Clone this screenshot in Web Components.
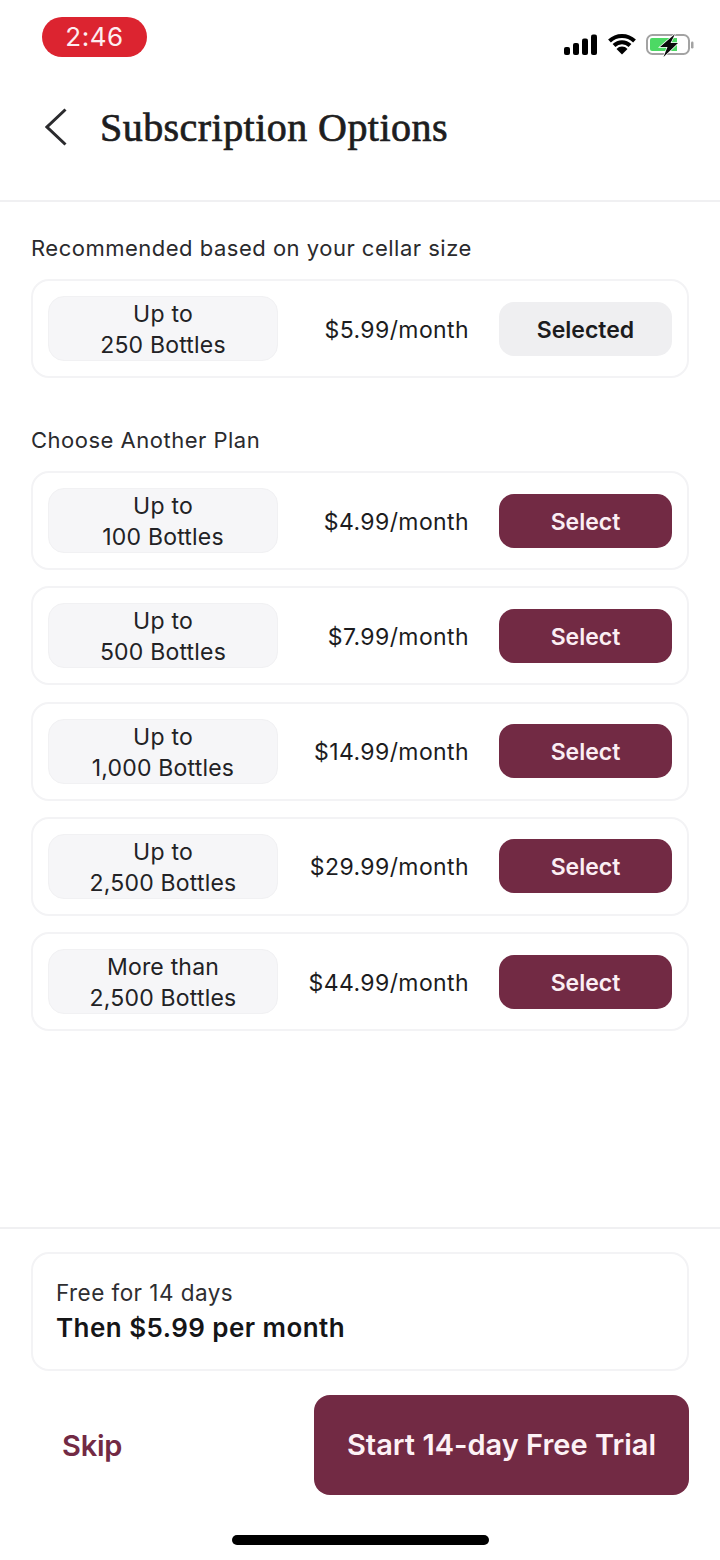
<!DOCTYPE html>
<html lang="en">
<head>
<meta charset="utf-8">
<title>Subscription Options</title>
<style>
    html, body {
        margin: 0;
        background: #fff;
    }
    body {
        width: 720px;
        height: 1560px;
        overflow: hidden;
        font-family: 'Inter', 'Liberation Sans', sans-serif;
        color: #1c1c1e;
    }
</style>
</head>
<body>
<subscription-page></subscription-page>
<script>
// --- Data for Plans ---
const recommendedPlan = { line1: 'Up to', line2: '250 Bottles', price: '$5.99/month', selected: true };
const otherPlans = [
    { line1: 'Up to', line2: '100 Bottles', price: '$4.99/month' },
    { line1: 'Up to', line2: '500 Bottles', price: '$7.99/month' },
    { line1: 'Up to', line2: '1,000 Bottles', price: '$14.99/month' },
    { line1: 'Up to', line2: '2,500 Bottles', price: '$29.99/month' },
    { line1: 'More than', line2: '2,500 Bottles', price: '$44.99/month' }
];

// --- Web Component: StatusBar ---
class StatusBar extends HTMLElement {
    constructor() {
        super();
        this.attachShadow({ mode: 'open' });
        this.shadowRoot.innerHTML = `
            <style>
                :host {
                    display: flex;
                    justify-content: space-between;
                    align-items: flex-start;
                    height: 80px;
                    padding: 17px 26px 0 42px;
                    box-sizing: border-box;
                }
                .time {
                    width: 105px;
                    height: 40px;
                    border-radius: 20px;
                    background: #dc2430;
                    color: #fdeef0;
                    font-size: 26px;
                    line-height: 40px;
                    text-align: center;
                    letter-spacing: 0.5px;
                }
                svg { display: block; margin-top: 14px; }
            </style>
            <div class="time">2:46</div>
            <svg width="130" height="26" viewBox="0 0 130 26" aria-hidden="true">
                <rect x="0" y="16" width="6" height="8" rx="2" fill="#000"/>
                <rect x="9" y="12" width="6" height="12" rx="2" fill="#000"/>
                <rect x="18" y="7.5" width="6" height="16.5" rx="2" fill="#000"/>
                <rect x="27" y="3.5" width="6" height="20.5" rx="2" fill="#000"/>
                <path d="M45.5 10 A18 18 0 0 1 70.5 10 M50 14.5 A11.5 11.5 0 0 1 66 14.5" fill="none" stroke="#000" stroke-width="4"/>
                <path d="M52.5 18 A7.5 7.5 0 0 1 63.5 18 L58 23.5 Z" fill="#000"/>
                <rect x="83" y="4" width="42" height="19" rx="5.5" fill="#fff" stroke="#a3a3a3" stroke-width="2"/>
                <path d="M86 9 a2 2 0 0 1 2 -2 H113 V20 H88 a2 2 0 0 1 -2 -2 Z" fill="#4cd964"/>
                <rect x="127" y="10.5" width="2.5" height="7" rx="1.2" fill="#a3a3a3"/>
                <path d="M111 3 L96 16 H103.5 L99.5 26 L114 12 H106.5 Z" fill="#0a0a0a" stroke="#fff" stroke-width="1.5" paint-order="stroke"/>
            </svg>
        `;
    }
}
customElements.define('status-bar', StatusBar);

// --- Web Component: NavHeader ---
class NavHeader extends HTMLElement {
    constructor() {
        super();
        this.attachShadow({ mode: 'open' });
        this.shadowRoot.innerHTML = `
            <style>
                :host {
                    display: flex;
                    align-items: center;
                    gap: 33px;
                    height: 122px;
                    padding: 0 0 26px 45px;
                    box-sizing: border-box;
                    border-bottom: 2px solid #f0f0f2;
                }
                svg { display: block; flex: none; }
                h1 {
                    margin: 0;
                    font-family: 'Liberation Serif', serif;
                    font-size: 40px;
                    font-weight: 400;
                    color: #1d1d20;
                    -webkit-text-stroke: 0.7px #1d1d20;
                    letter-spacing: 0.45px;
                }
            </style>
            <svg width="22" height="38" viewBox="0 0 22 38" aria-hidden="true">
                <path d="M20.5 1.5 L2 19 L20.5 36.5" fill="none" stroke="#2b2b2e" stroke-width="3"/>
            </svg>
            <h1><slot></slot></h1>
        `;
    }
}
customElements.define('nav-header', NavHeader);

// --- Web Component: PlanCard ---
class PlanCard extends HTMLElement {
    constructor() {
        super();
        this.attachShadow({ mode: 'open' });
    }

    set plan(plan) {
        this.shadowRoot.innerHTML = `
            <style>
                :host {
                    display: grid;
                    grid-template-columns: 230px 1fr 173px;
                    align-items: center;
                    height: 99px;
                    padding: 0 15px;
                    box-sizing: border-box;
                    border: 2px solid #f3f3f5;
                    border-radius: 18px;
                    background: #fff;
                }
                .size {
                    display: flex;
                    flex-direction: column;
                    align-items: center;
                    justify-content: center;
                    height: 65px;
                    padding-top: 3px;
                    box-sizing: border-box;
                    border: 1px solid #f1f1f3;
                    border-radius: 16px;
                    background: #f6f6f8;
                    font-size: 23px;
                    line-height: 31px;
                    color: #222225;
                    letter-spacing: 0.2px;
                }
                .price {
                    padding: 2px 30px 0 0;
                    text-align: right;
                    font-size: 23px;
                    color: #1c1c1e;
                    letter-spacing: 0.4px;
                }
                .action {
                    height: 54px;
                    border-radius: 15px;
                    text-align: center;
                    font-size: 23px;
                    font-weight: 600;
                    line-height: 56px;
                    background: #722a44;
                    color: #fbeef3;
                }
                .action.selected {
                    background: #efeff1;
                    color: #1c1c1e;
                }
            </style>
            <div class="size"><span>${plan.line1}</span><span>${plan.line2}</span></div>
            <div class="price">${plan.price}</div>
            <div class="action ${plan.selected ? 'selected' : ''}">${plan.selected ? 'Selected' : 'Select'}</div>
        `;
    }
}
customElements.define('plan-card', PlanCard);

// --- Web Component: PlanSection ---
class PlanSection extends HTMLElement {
    constructor() {
        super();
        this.attachShadow({ mode: 'open' });
        this.shadowRoot.innerHTML = `
            <style>
                :host {
                    display: block;
                }
                .label {
                    height: 28px;
                    margin-bottom: 17px;
                    font-size: 22px;
                    line-height: 28px;
                    color: #2a2a2d;
                    letter-spacing: 0.5px;
                }
                .list {
                    display: flex;
                    flex-direction: column;
                    gap: 16.25px;
                }
            </style>
            <div class="label"></div>
            <div class="list"></div>
        `;
    }

    set data(data) {
        this.shadowRoot.querySelector('.label').textContent = data.label;
        const list = this.shadowRoot.querySelector('.list');
        data.plans.forEach(plan => {
            const card = document.createElement('plan-card');
            card.plan = plan;
            list.appendChild(card);
        });
    }
}
customElements.define('plan-section', PlanSection);

// --- Web Component: TrialFooter ---
class TrialFooter extends HTMLElement {
    constructor() {
        super();
        this.attachShadow({ mode: 'open' });
        this.shadowRoot.innerHTML = `
            <style>
                :host {
                    display: block;
                    padding: 23px 31px 0;
                    border-top: 2px solid #f0f0f2;
                }
                .summary {
                    display: flex;
                    flex-direction: column;
                    justify-content: center;
                    gap: 2px;
                    height: 119px;
                    padding: 0 23px 2px;
                    box-sizing: border-box;
                    border: 2px solid #f3f3f5;
                    border-radius: 18px;
                }
                .free {
                    font-size: 22.5px;
                    line-height: 32px;
                    color: #2e2e31;
                    letter-spacing: 0.45px;
                }
                .then {
                    font-size: 26px;
                    font-weight: 600;
                    line-height: 34px;
                    color: #151517;
                    letter-spacing: 0.45px;
                }
                .actions {
                    display: flex;
                    justify-content: space-between;
                    align-items: center;
                    margin-top: 24px;
                }
                .skip {
                    padding-left: 31px;
                    font-size: 29px;
                    font-weight: 600;
                    color: #722a44;
                    letter-spacing: -0.2px;
                }
                .start {
                    width: 375px;
                    height: 100px;
                    border-radius: 16px;
                    background: #722a44;
                    color: #fdf1f5;
                    font-size: 29px;
                    font-weight: 600;
                    line-height: 100px;
                    text-align: center;
                }
            </style>
            <div class="summary">
                <div class="free">Free for 14 days</div>
                <div class="then">Then $5.99 per month</div>
            </div>
            <div class="actions">
                <div class="skip">Skip</div>
                <div class="start">Start 14-day Free Trial</div>
            </div>
        `;
    }
}
customElements.define('trial-footer', TrialFooter);

// --- Web Component: HomeIndicator ---
class HomeIndicator extends HTMLElement {
    constructor() {
        super();
        this.attachShadow({ mode: 'open' });
        this.shadowRoot.innerHTML = `
            <style>
                :host {
                    display: flex;
                    justify-content: center;
                    padding: 40px 0 15px;
                }
                div {
                    width: 257px;
                    height: 10px;
                    border-radius: 5px;
                    background: #000;
                }
            </style>
            <div></div>
        `;
    }
}
customElements.define('home-indicator', HomeIndicator);

// --- Web Component: SubscriptionPage ---
class SubscriptionPage extends HTMLElement {
    constructor() {
        super();
        this.attachShadow({ mode: 'open' });
        this.shadowRoot.innerHTML = `
            <style>
                :host {
                    display: flex;
                    flex-direction: column;
                    height: 1560px;
                }
                main {
                    flex: 1;
                    display: flex;
                    flex-direction: column;
                    gap: 48px;
                    padding: 32px 31px 0;
                }
            </style>
            <status-bar></status-bar>
            <nav-header>Subscription Options</nav-header>
            <main>
                <plan-section id="recommended"></plan-section>
                <plan-section id="others"></plan-section>
            </main>
            <trial-footer></trial-footer>
            <home-indicator></home-indicator>
        `;
        this.shadowRoot.getElementById('recommended').data = {
            label: 'Recommended based on your cellar size',
            plans: [recommendedPlan]
        };
        this.shadowRoot.getElementById('others').data = {
            label: 'Choose Another Plan',
            plans: otherPlans
        };
    }
}
customElements.define('subscription-page', SubscriptionPage);
</script>
</body>
</html>
